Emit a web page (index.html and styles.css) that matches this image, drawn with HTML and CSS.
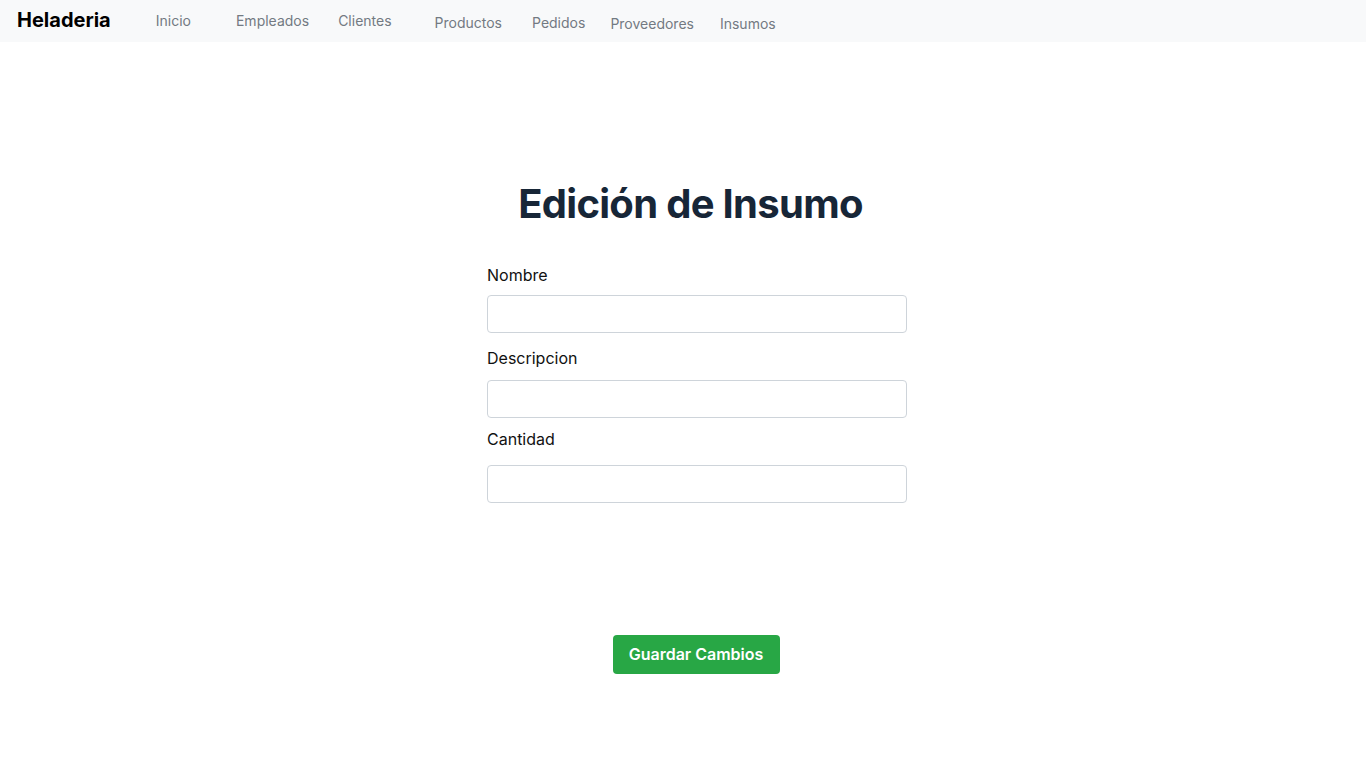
FILE: index.html
```html
<!DOCTYPE html>
<html lang="es">
<head>
<meta charset="utf-8">
<title>Edición de Insumo</title>
<link rel="stylesheet" href="styles.css">
</head>
<body>
<nav class="navbar">
  <a class="brand" href="#">Heladeria</a>
  <a class="nav-link l-inicio" href="#">Inicio</a>
  <a class="nav-link l-empleados" href="#">Empleados</a>
  <a class="nav-link l-clientes" href="#">Clientes</a>
  <a class="nav-link l-productos low1" href="#">Productos</a>
  <a class="nav-link l-pedidos low1" href="#">Pedidos</a>
  <a class="nav-link l-proveedores low2" href="#">Proveedores</a>
  <a class="nav-link l-insumos low2" href="#">Insumos</a>
</nav>
<main class="page">
  <h1 class="title">Edición de Insumo</h1>
  <form class="form">
    <div class="field f-nombre">
      <label class="label" for="nombre">Nombre</label>
      <input class="input" id="nombre" type="text">
    </div>
    <div class="field f-desc">
      <label class="label" for="descripcion">Descripcion</label>
      <input class="input" id="descripcion" type="text">
    </div>
    <div class="field f-cant">
      <label class="label" for="cantidad">Cantidad</label>
      <input class="input" id="cantidad" type="text">
    </div>
    <div class="actions">
      <button class="btn-save" type="button">Guardar Cambios</button>
    </div>
  </form>
</main>
</body>
</html>
```
FILE: styles.css
```css
* { box-sizing: border-box; }
html, body { margin: 0; padding: 0; }
body {
  font-family: Inter, "Noto Sans", sans-serif;
  background: #ffffff;
  color: #111;
}
.navbar {
  height: 42px;
  background: #f8f9fa;
  display: flex;
  align-items: flex-start;
  padding-left: 17px;
}
.brand {
  font-size: 20px;
  font-weight: 700;
  color: #000;
  text-decoration: none;
  line-height: 24px;
  margin-top: 8px;
}
.nav-link {
  font-size: 14px;
  color: #737a82;
  text-decoration: none;
  line-height: 20px;
  margin-top: 11px;
}
.low1 { margin-top: 13px; }
.low2 { margin-top: 14px; }
.l-inicio { margin-left: 45px; }
.l-empleados { margin-left: 45px; }
.l-clientes { margin-left: 29px; }
.l-productos { margin-left: 43px; }
.l-pedidos { margin-left: 30px; }
.l-proveedores { margin-left: 25px; }
.l-insumos { margin-left: 26px; }

.page {
  width: 420px;
  margin-left: 487px;
  padding-top: 138px;
}
.title {
  margin: 0;
  font-size: 40px;
  line-height: 48px;
  font-weight: 700;
  color: #172637;
  text-align: center;
  padding-right: 13px;
  letter-spacing: -0.7px;
}
.form { margin: 35px 0 0; }
.field { display: flex; flex-direction: column; }
.label {
  font-size: 16px;
  line-height: 24px;
  color: #111;
  margin-bottom: 8px;
}
.f-desc { margin-top: 13px; }
.f-desc .label { margin-bottom: 10px; }
.f-cant { margin-top: 9px; }
.f-cant .label { margin-bottom: 14px; }
.input {
  width: 420px;
  height: 38px;
  border: 1px solid #ced4da;
  border-radius: 4px;
  background: #fff;
  font: inherit;
  padding: 6px 12px;
}
.actions {
  display: flex;
  justify-content: center;
  margin-top: 132px;
}
.btn-save {
  font-family: Inter, "Noto Sans", sans-serif;
  font-size: 16px;
  font-weight: 600;
  line-height: 25px;
  padding: 7px 16px;
  border: 0;
  border-radius: 4px;
  background: #28a745;
  color: #fff;
  width: 167px;
  margin-left: -2px;
}
```
